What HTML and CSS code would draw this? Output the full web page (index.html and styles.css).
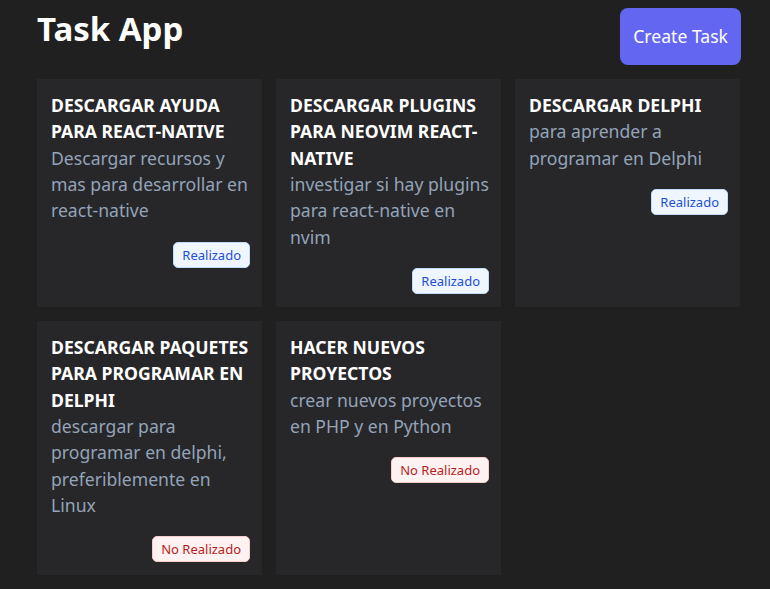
FILE: index.html
```html
<!DOCTYPE html>
<html lang="es">
<head>
<meta charset="utf-8">
<title>Task App</title>
<link rel="stylesheet" href="styles.css">
</head>
<body>
<div class="app">
  <header class="header">
    <h1 class="title">Task App</h1>
    <button class="create-btn">Create Task</button>
  </header>
  <main class="grid">
    <article class="card">
      <h2 class="card-title">DESCARGAR AYUDA PARA REACT-NATIVE</h2>
      <p class="card-desc">Descargar recursos y mas para desarrollar en react-native</p>
      <div class="card-footer"><span class="badge done">Realizado</span></div>
    </article>
    <article class="card">
      <h2 class="card-title">DESCARGAR PLUGINS PARA NEOVIM REACT-NATIVE</h2>
      <p class="card-desc">investigar si hay plugins para react-native en nvim</p>
      <div class="card-footer"><span class="badge done">Realizado</span></div>
    </article>
    <article class="card">
      <h2 class="card-title">DESCARGAR DELPHI</h2>
      <p class="card-desc">para aprender a programar en Delphi</p>
      <div class="card-footer"><span class="badge done">Realizado</span></div>
    </article>
    <article class="card">
      <h2 class="card-title">DESCARGAR PAQUETES PARA PROGRAMAR EN DELPHI</h2>
      <p class="card-desc">descargar para programar en delphi, preferiblemente en Linux</p>
      <div class="card-footer"><span class="badge pending">No Realizado</span></div>
    </article>
    <article class="card">
      <h2 class="card-title">HACER NUEVOS PROYECTOS</h2>
      <p class="card-desc">crear nuevos proyectos en PHP y en Python</p>
      <div class="card-footer"><span class="badge pending">No Realizado</span></div>
    </article>
  </main>
</div>
</body>
</html>
```

FILE: styles.css
```css
* { box-sizing: border-box; }
html, body { margin: 0; padding: 0; }
body {
  background: #202020;
  font-family: "Noto Sans", "Open Sans", sans-serif;
  color: #ffffff;
}
.app {
  width: 704px;
  margin-left: 37px;
  padding-top: 8px;
}
.header {
  display: flex;
  justify-content: space-between;
  align-items: flex-start;
  margin-bottom: 14px;
}
.title {
  margin: 0;
  font-size: 33px;
  font-weight: 700;
  line-height: 41px;
}
.create-btn {
  background: #6366f1;
  color: #ffffff;
  border: none;
  border-radius: 8px;
  font-family: inherit;
  font-size: 17.6px;
  line-height: 25px;
  padding: 16px 13px;
  cursor: pointer;
}
.grid {
  display: grid;
  grid-template-columns: repeat(3, 225px);
  gap: 14px;
}
.card {
  background: #27272a;
  padding: 13px 12px 13px 14px;
  display: flex;
  flex-direction: column;
}
.card-title {
  margin: 0;
  font-size: 17.6px;
  font-weight: 700;
  line-height: 26.33px;
  color: #ffffff;
}
.card-desc {
  margin: 0;
  font-size: 17.6px;
  line-height: 26.33px;
  color: #94a3b8;
}
.card-footer {
  display: flex;
  justify-content: flex-end;
  margin-top: 18px;
}
.badge {
  font-size: 13px;
  line-height: 18px;
  padding: 3px 8px;
  border-radius: 5px;
  border: 1px solid;
}
.badge.done {
  background: #eff6ff;
  color: #1d4ed8;
  border-color: #bfdbfe;
}
.badge.pending {
  background: #fef2f2;
  color: #b91c1c;
  border-color: #fecaca;
}
```
